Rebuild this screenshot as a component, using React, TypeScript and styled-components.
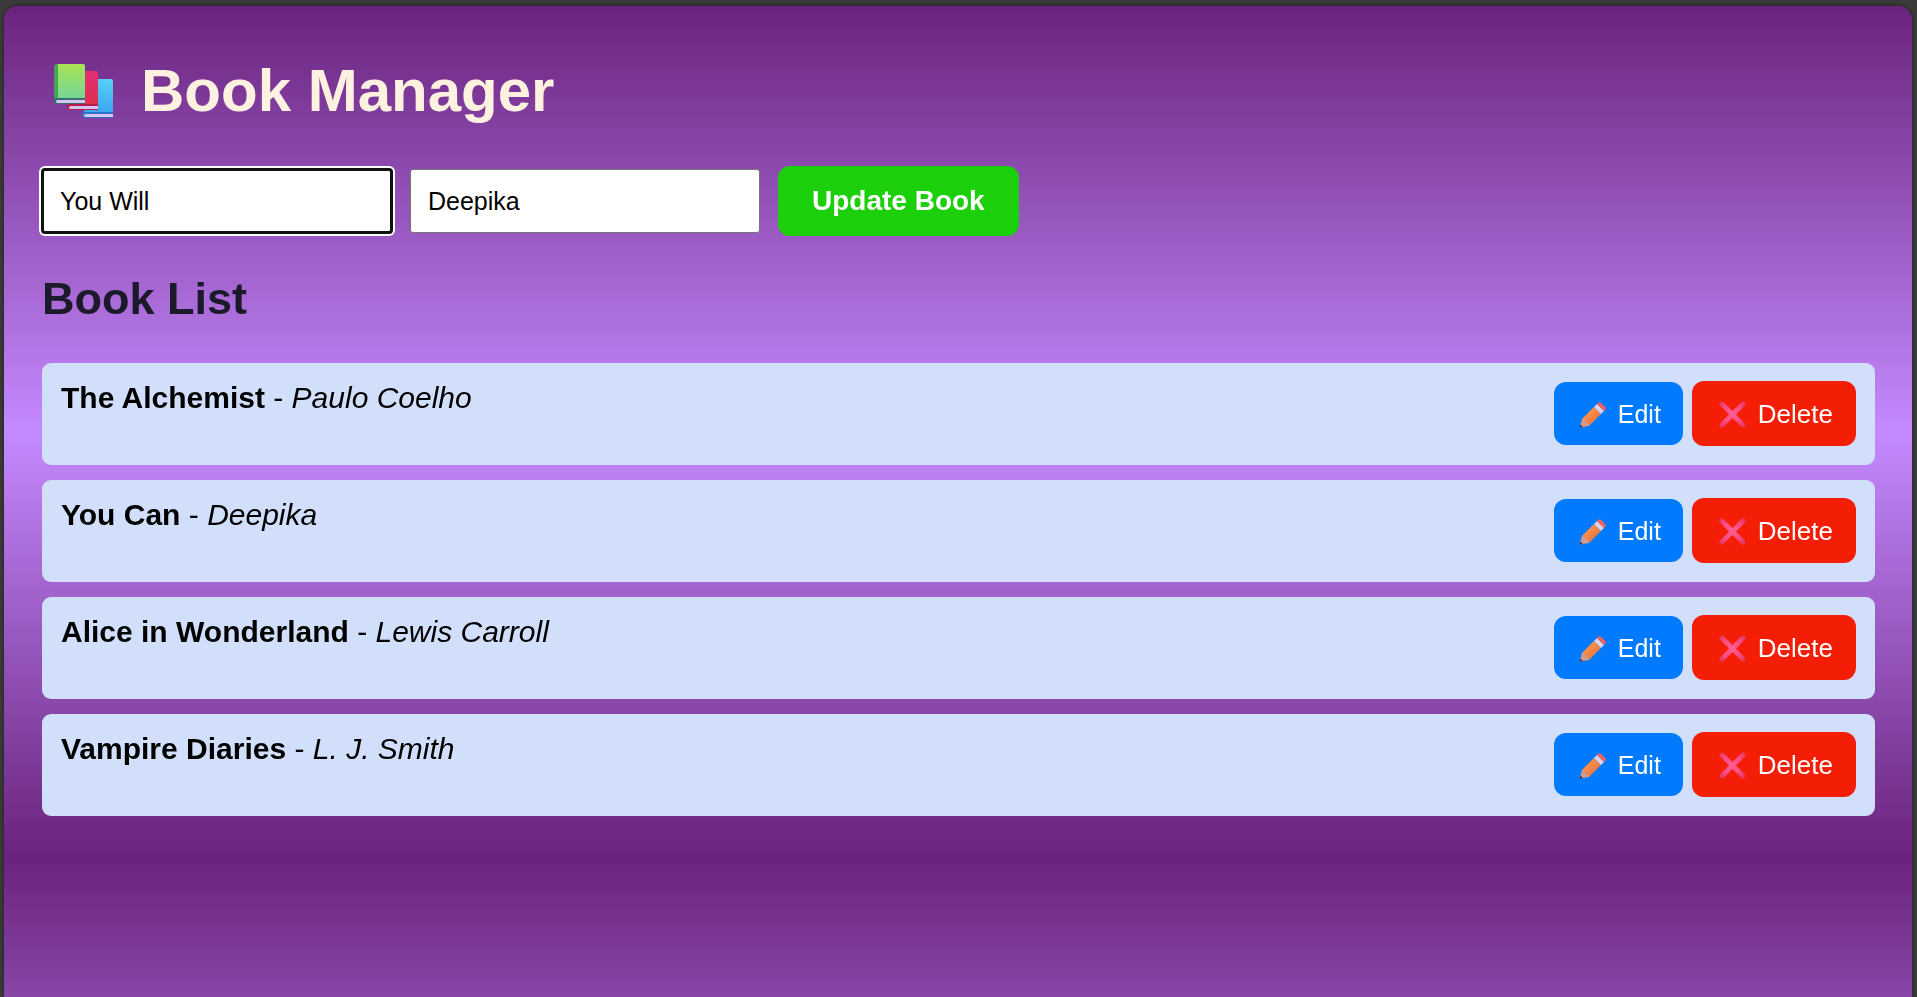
import React, { useState } from "react";
import styled, { createGlobalStyle, css } from "styled-components";

const GlobalStyle = createGlobalStyle`
  *, *::before, *::after { box-sizing: border-box; }
  body {
    margin: 0;
    background: #3b3b3b;
    font-family: "Liberation Sans", Arial, sans-serif;
    color: #000;
  }
`;

const Frame = styled.div`
  display: flex;
  min-height: 100vh;
  padding: 6px 5px 0 4px;
`;

const Page = styled.main`
  flex: 1;
  padding: 50px 37px 40px 38px;
  border-radius: 14px 14px 0 0;
  background: linear-gradient(#6a237d, #c58aff, #6a237d) 0 0 / 100% 850px;
  box-shadow: 0 0 4px rgba(0, 0, 0, 0.5);
`;

const Title = styled.h1`
  display: flex;
  align-items: center;
  gap: 27px;
  margin: 0 0 40px;
  padding-left: 12px;
  font-size: 60px;
  line-height: 70px;
  color: #fff1e0;
`;

const Form = styled.form`
  display: flex;
  align-items: center;
  gap: 18px;
`;

const Field = styled.input`
  width: 350px;
  height: 64px;
  padding: 0 17px;
  border: 1px solid #767676;
  border-radius: 3px;
  background: #fff;
  font: 25px "Liberation Sans", Arial, sans-serif;
  color: #000;
  outline: none;

  &:focus {
    border: 2px solid #101010;
    padding: 0 16px;
    box-shadow: 0 0 0 1px #101010, 0 0 0 3px #fff;
  }
`;

const buttonBase = css`
  display: flex;
  align-items: center;
  justify-content: center;
  border: 0;
  border-radius: 12px;
  color: #fff;
  font-family: "Liberation Sans", Arial, sans-serif;
  cursor: pointer;
`;

const SubmitButton = styled.button`
  ${buttonBase}
  height: 70px;
  padding: 0 34px;
  background: #1bcf0b;
  font-size: 28px;
  font-weight: bold;
`;

const SectionTitle = styled.h2`
  margin: 37px 0 38px;
  font-size: 45px;
  line-height: 52px;
  color: #1a1a2b;
`;

const List = styled.ul`
  display: flex;
  flex-direction: column;
  gap: 15px;
  margin: 0;
  padding: 0;
  list-style: none;
`;

const Row = styled.li`
  display: flex;
  justify-content: space-between;
  padding: 18px 19px 19px;
  border-radius: 9px;
  background: #d2dffb;
`;

const BookText = styled.span`
  font-size: 30px;
  line-height: 34px;
`;

const Actions = styled.div`
  display: flex;
  align-items: center;
  gap: 9px;
`;

const ActionButton = styled.button<{ $danger?: boolean }>`
  ${buttonBase}
  gap: 12px;
  height: ${(p) => (p.$danger ? 65 : 63)}px;
  padding: ${(p) => (p.$danger ? "2px 23px 0 27px" : "2px 22px 0 25px")};
  background: ${(p) => (p.$danger ? "#f41d05" : "#007bff")};
  font-size: ${(p) => (p.$danger ? 26 : 25)}px;
`;

const BooksIcon = () => (
  <svg width="60" height="56" viewBox="0 0 60 56" aria-hidden="true">
    <defs>
      <linearGradient id="bookGreen" x1="0" y1="0" x2="0" y2="1">
        <stop offset="0" stopColor="#a9e352" />
        <stop offset="1" stopColor="#72d69a" />
      </linearGradient>
      <linearGradient id="bookRed" x1="0" y1="0" x2="0" y2="1">
        <stop offset="0" stopColor="#e22f74" />
        <stop offset="1" stopColor="#e0304a" />
      </linearGradient>
      <linearGradient id="bookBlue" x1="0" y1="0" x2="0" y2="1">
        <stop offset="0" stopColor="#55d0f4" />
        <stop offset="1" stopColor="#3aa5f0" />
      </linearGradient>
    </defs>
    <path d="M30 16h27q2 0 2 2v33H30z" fill="url(#bookBlue)" />
    <path d="M28 52q0-3 3-3h28v6H31q-3 0-3-3z" fill="#2f6fd0" />
    <path d="M31 51h28v3H31q-2-1.500 0-3z" fill="#d5c5ef" />
    <path d="M16 8h26q2 0 2 2v35H16z" fill="url(#bookRed)" />
    <path d="M13 44q0-3 3-3h28v6H16q-3 0-3-3z" fill="#b81c4c" />
    <path d="M16 43h28v3H16q-2-1.500 0-3z" fill="#d5c5ef" />
    <path d="M3 1h26q2 0 2 2v34H3z" fill="url(#bookGreen)" />
    <path d="M0 4q0-3 4-3v34H0z" fill="#47a358" />
    <path d="M0 35h31v6H3q-3 0-3-3z" fill="#356e73" />
    <path d="M3 37h28v3H3q-2-1.500 0-3z" fill="#d5c5ef" />
  </svg>
);

const PencilIcon = () => (
  <svg width="27" height="26" viewBox="0 0 27 26" aria-hidden="true">
    <defs>
      <linearGradient id="pencilBody" x1="0" y1="0" x2="1" y2="1">
        <stop offset="0.300" stopColor="#ff9147" />
        <stop offset="0.750" stopColor="#e87644" />
      </linearGradient>
    </defs>
    <path d="M3 17 15 5l7 7L10 24z" fill="url(#pencilBody)" />
    <path d="M3 17 1 24q0 1.500 1.500 1.300L10 24q0-3-3-3.500Q6 17 3 17z" fill="#cf9a91" />
    <path d="m1.400 22.500-.6 2q0 1.200 1.400 1L4 25z" fill="#5c3046" />
    <path d="m15 5 3-3 7 7-3 3z" fill="#dcd3ec" />
    <path d="m18 2 1-1q1.500-1.500 3 0l4 4q1.500 1.500 0 3l-1 1z" fill="#ff6254" />
  </svg>
);

const CrossIcon = () => (
  <svg width="27" height="27" viewBox="0 0 27 27" aria-hidden="true">
    <defs>
      <radialGradient id="crossFill" gradientUnits="userSpaceOnUse" cx="13" cy="13" r="17">
        <stop offset="0" stopColor="#ff5f94" />
        <stop offset="0.600" stopColor="#fb4b83" />
        <stop offset="1" stopColor="#e2365c" />
      </radialGradient>
    </defs>
    <path d="M3 3l21 21M24 3L3 24" fill="none" stroke="url(#crossFill)" strokeWidth="5" strokeLinecap="round" />
  </svg>
);

const books = [
  { title: "The Alchemist", author: "Paulo Coelho" },
  { title: "You Can", author: "Deepika" },
  { title: "Alice in Wonderland", author: "Lewis Carroll" },
  { title: "Vampire Diaries", author: "L. J. Smith" },
];

export default function App() {
  const [title, setTitle] = useState("You Will");
  const [author, setAuthor] = useState("Deepika");

  return (
    <>
      <GlobalStyle />
      <Frame>
        <Page>
          <Title>
            <BooksIcon />
            Book Manager
          </Title>
          <Form onSubmit={(e) => e.preventDefault()}>
            <Field aria-label="Title" autoFocus value={title} onChange={(e) => setTitle(e.target.value)} />
            <Field aria-label="Author" value={author} onChange={(e) => setAuthor(e.target.value)} />
            <SubmitButton type="submit">Update Book</SubmitButton>
          </Form>
          <SectionTitle>Book List</SectionTitle>
          <List>
            {books.map((book) => (
              <Row key={book.title}>
                <BookText>
                  <strong>{book.title}</strong> - <em>{book.author}</em>
                </BookText>
                <Actions>
                  <ActionButton type="button">
                    <PencilIcon />
                    Edit
                  </ActionButton>
                  <ActionButton type="button" $danger>
                    <CrossIcon />
                    Delete
                  </ActionButton>
                </Actions>
              </Row>
            ))}
          </List>
        </Page>
      </Frame>
    </>
  );
}
